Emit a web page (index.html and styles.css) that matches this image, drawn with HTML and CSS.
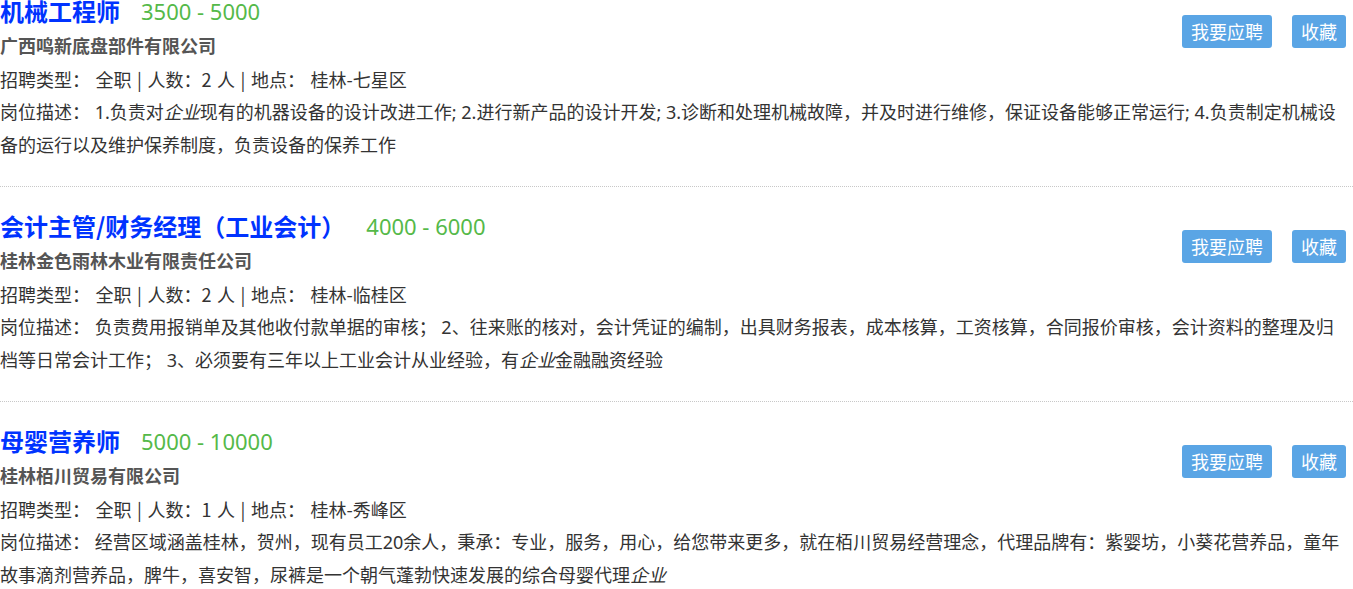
FILE: index.html
```html
<!DOCTYPE html>
<html lang="zh-CN">
<head>
<meta charset="utf-8">
<title>职位列表</title>
<link rel="stylesheet" href="styles.css">
</head>
<body>
<div class="job-list">
  <div class="job">
    <div class="job-actions">
      <a class="btn">我要应聘</a>
      <a class="btn">收藏</a>
    </div>
    <div class="job-head"><a class="job-title">机械工程师</a><span class="salary">3500 - 5000</span></div>
    <div class="company">广西鸣新底盘部件有限公司</div>
    <div class="info">招聘类型： 全职 | 人数：2 人 | 地点： 桂林-七星区</div>
    <div class="desc">岗位描述： 1.负责对<em>企业</em>现有的机器设备的设计改进工作; 2.进行新产品的设计开发; 3.诊断和处理机械故障，并及时进行维修，保证设备能够正常运行; 4.负责制定机械设备的运行以及维护保养制度，负责设备的保养工作</div>
  </div>
  <div class="job">
    <div class="job-actions">
      <a class="btn">我要应聘</a>
      <a class="btn">收藏</a>
    </div>
    <div class="job-head"><a class="job-title">会计主管/财务经理（工业会计）</a><span class="salary">4000 - 6000</span></div>
    <div class="company">桂林金色雨林木业有限责任公司</div>
    <div class="info">招聘类型： 全职 | 人数：2 人 | 地点： 桂林-临桂区</div>
    <div class="desc">岗位描述： 负责费用报销单及其他收付款单据的审核； 2、往来账的核对，会计凭证的编制，出具财务报表，成本核算，工资核算，合同报价审核，会计资料的整理及归档等日常会计工作； 3、必须要有三年以上工业会计从业经验，有<em>企业</em>金融融资经验</div>
  </div>
  <div class="job">
    <div class="job-actions">
      <a class="btn">我要应聘</a>
      <a class="btn">收藏</a>
    </div>
    <div class="job-head"><a class="job-title">母婴营养师</a><span class="salary">5000 - 10000</span></div>
    <div class="company">桂林栢川贸易有限公司</div>
    <div class="info">招聘类型： 全职 | 人数：1 人 | 地点： 桂林-秀峰区</div>
    <div class="desc">岗位描述： 经营区域涵盖桂林，贺州，现有员工20余人，秉承：专业，服务，用心，给您带来更多，就在栢川贸易经营理念，代理品牌有：紫婴坊，小葵花营养品，童年故事滴剂营养品，脾牛，喜安智，尿裤是一个朝气蓬勃快速发展的综合母婴代理<em>企业</em></div>
  </div>
</div>
</body>
</html>
```

FILE: styles.css
```css
html, body {
  margin: 0;
  padding: 0;
  background: #fff;
}

body {
  font-family: "Noto Sans", "Noto Sans CJK SC", sans-serif;
  color: #333;
  font-size: 18px;
}

.job-list {
  width: 100%;
}

.job {
  padding: 28px 7px 24px 0;
  border-bottom: 1px dotted #c8c8c8;
}

.job:first-child {
  padding-top: 0;
}

.job-actions {
  float: right;
  margin-top: 15px;
  display: flex;
  gap: 20px;
}

.btn {
  display: block;
  height: 33px;
  line-height: 33px;
  padding: 0 9px;
  background: #5aa5e5;
  color: #fff;
  border-radius: 3px;
  font-size: 18px;
  font-family: "Noto Sans CJK SC", sans-serif;
}

.job-head {
  line-height: 22px;
  height: 22px;
  display: flex;
  align-items: center;
  gap: 21px;
}

.job-title {
  font-size: 24px;
  font-weight: bold;
  color: #0033ff;
  font-family: "Noto Sans CJK SC", sans-serif;
}

.salary {
  font-size: 22px;
  color: #55b949;
}

.company {
  margin-top: 8px;
  line-height: 33px;
  font-size: 18px;
  font-weight: bold;
  color: #555;
}

.info {
  line-height: 33px;
  font-family: "Noto Sans CJK SC", sans-serif;
  word-spacing: 1.5px;
}

.desc {
  line-height: 33px;
}

.desc em {
  font-style: italic;
}
```
